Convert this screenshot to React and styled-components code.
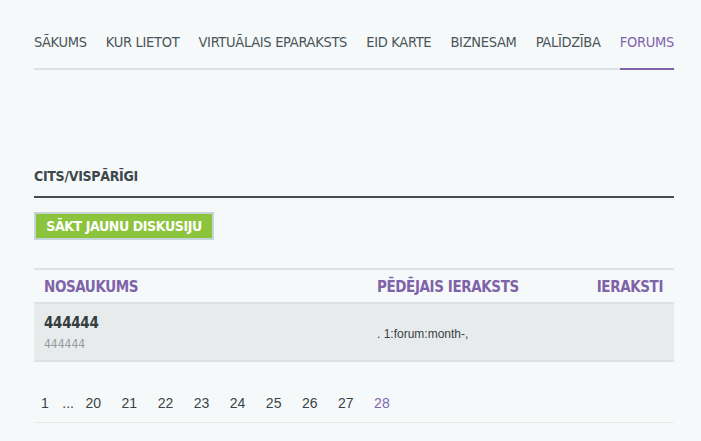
import React from "react";
import styled, { createGlobalStyle } from "styled-components";

const GlobalStyle = createGlobalStyle`
  body {
    margin: 0;
    background: #f6f9fa;
    font-family: "DejaVu Sans Condensed", "DejaVu Sans", sans-serif;
  }
`;

const navItems = [
  "SĀKUMS",
  "KUR LIETOT",
  "VIRTUĀLAIS EPARAKSTS",
  "EID KARTE",
  "BIZNESAM",
  "PALĪDZĪBA",
  "FORUMS",
];

const pages = ["20", "21", "22", "23", "24", "25", "26", "27"];

const App = () => {
  return (
    <>
      <GlobalStyle />
      <Page>
        <Nav>
          {navItems.map((item) => (
            <NavItem key={item} active={item === "FORUMS"}>
              {item}
            </NavItem>
          ))}
        </Nav>

        <SectionTitle>CITS/VISPĀRĪGI</SectionTitle>

        <ButtonWrap>
          <NewButton>SĀKT JAUNU DISKUSIJU</NewButton>
        </ButtonWrap>

        <Table>
          <HeadRow>
            <NameCol>
              <HeadText>NOSAUKUMS</HeadText>
            </NameCol>
            <LastCol>
              <HeadText>PĒDĒJAIS IERAKSTS</HeadText>
            </LastCol>
            <CountCol>
              <HeadText>IERAKSTI</HeadText>
            </CountCol>
          </HeadRow>
          <TopicRow>
            <NameCol>
              <TopicTitle>444444</TopicTitle>
              <TopicDesc>444444</TopicDesc>
            </NameCol>
            <LastCol>
              <LastPost>. 1:forum:month-,</LastPost>
            </LastCol>
            <CountCol />
          </TopicRow>
        </Table>

        <Pager>
          <PageLink>1</PageLink>
          <Ellipsis>...</Ellipsis>
          {pages.map((p) => (
            <PageLink key={p}>{p}</PageLink>
          ))}
          <PageLink current>28</PageLink>
        </Pager>
      </Page>
    </>
  );
};

export default App;

const Page = styled.div`
  width: 640px;
  margin-left: 34px;
`;

const Nav = styled.nav`
  display: flex;
  justify-content: space-between;
  border-bottom: 2px solid #dde1e2;
`;

const NavItem = styled.a`
  padding: 32px 0 16px;
  margin-bottom: -2px;
  font-size: 14.5px;
  line-height: 20px;
  letter-spacing: -0.3px;
  color: ${(p) => (p.active ? "#8063aa" : "#4a5558")};
  border-bottom: 2px solid ${(p) => (p.active ? "#8063aa" : "transparent")};
  white-space: nowrap;
`;

const SectionTitle = styled.h2`
  margin: 96px 0 0;
  padding-bottom: 10px;
  font-size: 14px;
  line-height: 20px;
  font-weight: 700;
  letter-spacing: -0.3px;
  color: #3e484b;
  border-bottom: 2px solid #434d50;
`;

const ButtonWrap = styled.div`
  margin-top: 14px;
  display: flex;
`;

const NewButton = styled.button`
  height: 28px;
  width: 180px;
  padding: 0;
  border: 2px solid #c6d5d9;
  background: #8cc43e;
  color: #fff;
  font-family: inherit;
  font-size: 14px;
  font-weight: 700;
  letter-spacing: -0.4px;
  line-height: 24px;
  cursor: pointer;
`;

const Table = styled.div`
  margin-top: 28px;
  border-top: 2px solid #dde2e3;
`;

const HeadRow = styled.div`
  display: flex;
  align-items: center;
  height: 32px;
  border-bottom: 2px solid #dde2e3;
`;

const TopicRow = styled.div`
  display: flex;
  align-items: center;
  height: 56px;
  background: #e8ebec;
  border-bottom: 2px solid #dde2e3;
`;

const NameCol = styled.div`
  width: 333px;
  padding-left: 10px;
`;

const LastCol = styled.div`
  flex: 1;
`;

const CountCol = styled.div`
  width: 120px;
  padding-right: 11px;
  text-align: right;
`;

const HeadText = styled.span`
  font-size: 15px;
  font-weight: 700;
  letter-spacing: -0.4px;
  color: #7f63a9;
`;

const TopicTitle = styled.div`
  font-size: 15px;
  line-height: 20px;
  font-weight: 700;
  letter-spacing: -0.3px;
  color: #343d40;
`;

const TopicDesc = styled.div`
  margin-top: 3px;
  font-size: 12px;
  line-height: 16px;
  color: #939b9d;
`;

const LastPost = styled.span`
  font-family: "Liberation Sans", Arial, sans-serif;
  font-size: 12px;
  color: #3a4346;
`;

const Pager = styled.div`
  display: flex;
  align-items: center;
  gap: 20.5px;
  padding: 32px 0 10px 7px;
  border-bottom: 1px solid #ece9e4;
  font-family: "Liberation Sans", Arial, sans-serif;
  font-size: 14px;
  line-height: 18px;
`;

const PageLink = styled.a`
  color: ${(p) => (p.current ? "#8466ad" : "#3a4346")};
  cursor: pointer;
`;

const Ellipsis = styled.span`
  margin: 0 -9px 0 -7px;
  color: #3a4346;
`;
